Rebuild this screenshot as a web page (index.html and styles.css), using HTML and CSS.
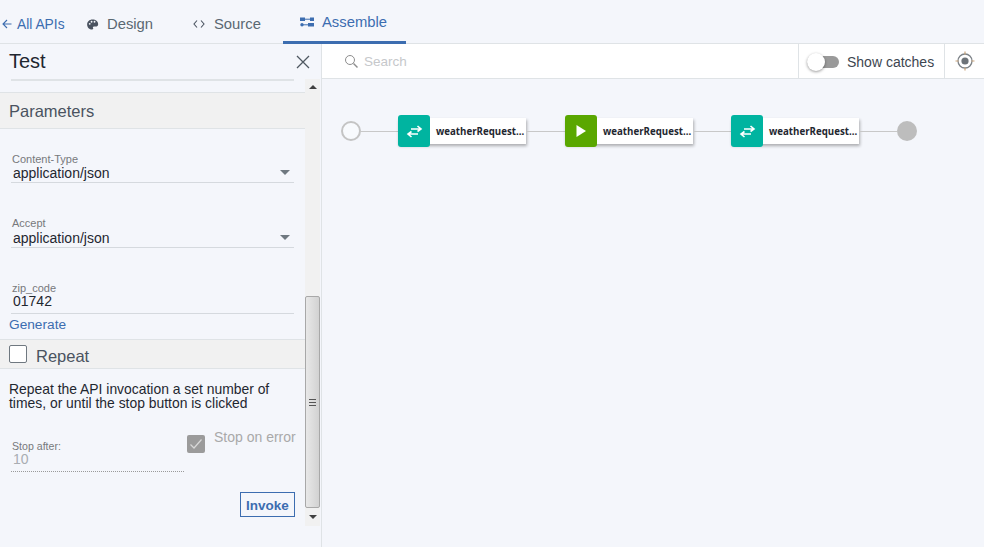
FILE: index.html
```html
<!DOCTYPE html>
<html lang="en">
<head>
    <meta charset="UTF-8">
    <meta name="viewport" content="width=device-width, initial-scale=1.0">
    <title>Assemble</title>
    <link rel="stylesheet" href="styles.css">
</head>
<body>
    <nav class="topnav">
        <a class="back-link">
            <svg width="10" height="10" viewBox="0 0 10 10"><path fill="none" stroke="#3c6db0" stroke-width="1.100" d="M5 1 1 5l4 4M1 5h8.500"/></svg>
            All APIs
        </a>
        <a class="tab tab-design">
            <svg class="tab-icon" width="13" height="13" viewBox="0 0 14 14"><path fill="#4a5360" fill-rule="evenodd" d="M7 1.500C3.600 1.500 1.200 3.900 1.200 7s2.500 5.500 5.300 5.500c1.300 0 1.500-.9 1.100-1.600-.5-.9 0-1.700 1-1.700h1.600c1.800 0 2.900-1 2.900-2.600C13.100 3.600 10.500 1.500 7 1.500zM4 7.300a1 1 0 1 1 0-2 1 1 0 0 1 0 2zm2-2.300a1 1 0 1 1 0-2 1 1 0 0 1 0 2zm3.200 0a1 1 0 1 1 0-2 1 1 0 0 1 0 2z"/></svg>
            Design
        </a>
        <a class="tab tab-source">
            <svg class="tab-icon" width="12" height="10" viewBox="0 0 12 10"><path fill="none" stroke="#4a5360" stroke-width="1.100" d="M4 1.500 1 5l3 3.500M8 1.500 11 5 8 8.500"/></svg>
            Source
        </a>
        <a class="tab tab-active">
            <svg class="tab-icon" width="14" height="10" viewBox="0 0 14 10"><g fill="#3c6db0"><rect x="0" y="0.500" width="5" height="3.500"/><rect x="10" y="0.500" width="4" height="3.500"/><rect x="5" y="1.700" width="5" height="1"/><circle cx="2" cy="7.800" r="1.700"/><rect x="2" y="7.300" width="7" height="1"/><rect x="8" y="6" width="6" height="3.500"/></g></svg>
            Assemble
        </a>
    </nav>

    <div class="workspace">
        <aside class="test-panel">
            <div class="panel-title">
                <h1>Test</h1>
                <svg width="14" height="14" viewBox="0 0 14 14"><path stroke="#4f5861" stroke-width="1.300" d="M1 1l12 12M13 1 1 13"/></svg>
            </div>

            <div class="panel-scroll">
                <div class="panel-content">
                    <div class="title-rule"></div>
                    <h2 class="section-head">Parameters</h2>

                    <div class="field field-first">
                        <label>Content-Type</label>
                        <div class="field-value">application/json<span class="caret"></span></div>
                    </div>
                    <div class="field field-next">
                        <label>Accept</label>
                        <div class="field-value">application/json<span class="caret"></span></div>
                    </div>
                    <div class="field field-zip">
                        <label>zip_code</label>
                        <div class="field-value">01742</div>
                    </div>
                    <a class="generate">Generate</a>

                    <div class="section-head repeat-head">
                        <span class="checkbox"></span>
                        <span class="repeat-label">Repeat</span>
                    </div>
                    <p class="repeat-desc">Repeat the API invocation a set number of times, or until the stop button is clicked</p>

                    <div class="stop-row">
                        <div class="stop-after">
                            <label>Stop after:</label>
                            <div class="stop-value">10</div>
                        </div>
                        <span class="checkbox-disabled">
                            <svg width="14" height="12" viewBox="0 0 14 12"><path fill="none" stroke="#d8d8d8" stroke-width="1.200" d="M1.500 6.500 5 10l7.500-8.500"/></svg>
                        </span>
                        <span class="stop-error">Stop on error</span>
                    </div>

                    <div class="invoke-row">
                        <button class="invoke">Invoke</button>
                    </div>
                </div>

                <div class="scrollbar">
                    <span class="arrow-up"></span>
                    <div class="scroll-space"></div>
                    <div class="scroll-thumb"><span class="grip"></span></div>
                    <span class="arrow-down"></span>
                </div>
            </div>
        </aside>

        <main class="canvas-area">
            <div class="toolbar">
                <div class="search">
                    <svg width="15" height="15" viewBox="0 0 15 15"><circle cx="6" cy="6" r="4.500" fill="none" stroke="#8d8d8d"/><path stroke="#8d8d8d" stroke-width="1.500" d="M9.500 9.500l4 4"/></svg>
                    <span>Search</span>
                </div>
                <div class="catches">
                    <span class="toggle"><span class="knob"></span></span>
                    Show catches
                </div>
                <div class="locate">
                    <svg width="20" height="20" viewBox="0 0 20 20"><circle cx="10" cy="10" r="7" fill="none" stroke="#7d8388" stroke-width="1.300"/><circle cx="10" cy="10" r="3.600" fill="#6d7378"/><path stroke="#c9a47a" stroke-width="1.200" d="M10 0.500v3M10 16.500v3M0.500 10h3M16.500 10h3"/></svg>
                </div>
            </div>

            <div class="flow">
                <span class="node-start"></span>
                <span class="wire wire-short"></span>
                <div class="policy">
                    <span class="policy-icon teal">
                        <svg width="17" height="13" viewBox="0 0 17 13"><g fill="none" stroke="#fff" stroke-width="1.600"><path d="M5 4h10M11.500 1l3.500 3-3.500 2.500"/><path d="M12 9H2M5.500 6.500 2 9l3.500 3"/></g></svg>
                    </span>
                    <span class="policy-name">weatherRequest...</span>
                </div>
                <span class="wire wire-long"></span>
                <div class="policy">
                    <span class="policy-icon green">
                        <svg width="12" height="12" viewBox="0 0 12 12"><path fill="#fff" d="M1.500 0 11 6l-9.500 6z"/></svg>
                    </span>
                    <span class="policy-name">weatherRequest...</span>
                </div>
                <span class="wire"></span>
                <div class="policy">
                    <span class="policy-icon teal">
                        <svg width="17" height="13" viewBox="0 0 17 13"><g fill="none" stroke="#fff" stroke-width="1.600"><path d="M5 4h10M11.500 1l3.500 3-3.500 2.500"/><path d="M12 9H2M5.500 6.500 2 9l3.500 3"/></g></svg>
                    </span>
                    <span class="policy-name">weatherRequest...</span>
                </div>
                <span class="wire"></span>
                <span class="node-end"></span>
            </div>
        </main>
    </div>
</body>
</html>
```

FILE: styles.css
```css
* {
    box-sizing: border-box;
}

html, body {
    height: 100%;
}

body {
    margin: 0;
    background-color: #f4f6fb;
    color: #1f2730;
    font-family: 'Liberation Sans', Arial, sans-serif;
    display: flex;
    flex-direction: column;
    overflow: hidden;
}

/* Top navigation */
.topnav {
    height: 44px;
    flex: none;
    display: flex;
    align-items: stretch;
    border-bottom: 1px solid #dfe3e6;
    font-size: 14.800px;
    color: #5a6872;
}

.back-link {
    display: flex;
    align-items: center;
    gap: 5px;
    height: 44px;
    width: 86px;
    padding: 4px 0 0 2px;
    color: #3c6db0;
    font-size: 13.800px;
}

.tab {
    display: flex;
    align-items: center;
    height: 44px;
    padding-top: 4px;
}

.tab-design {
    width: 107px;
    gap: 8px;
}

.tab-source {
    width: 90px;
    gap: 9px;
}

.tab-active {
    width: 123px;
    gap: 8px;
    padding-left: 17px;
    padding-top: 2px;
    color: #3c6db0;
    border-bottom: 3px solid #3c6db0;
}

/* Left test panel */
.workspace {
    flex: 1;
    display: flex;
    min-height: 0;
}

.test-panel {
    width: 322px;
    flex: none;
    border-right: 1px solid #dfe3e6;
}

.panel-title {
    height: 35px;
    display: flex;
    align-items: center;
    justify-content: space-between;
    padding: 0 11px 0 9px;
}

.panel-title h1 {
    margin: 0;
    font-size: 20px;
    font-weight: normal;
}

.panel-scroll {
    display: flex;
    height: 447px;
}

.panel-content {
    width: 305px;
    flex: none;
}

.title-rule {
    height: 2px;
    margin: 0 11px;
    background-color: #dfe3e6;
}

.section-head {
    margin: 0;
    background-color: #f1f1f1;
    border-top: 1px solid #dfe3e6;
    border-bottom: 1px solid #dfe3e6;
    font-size: 16.500px;
    font-weight: normal;
    color: #4a5360;
}

h2.section-head {
    margin-top: 11px;
    height: 37px;
    line-height: 36px;
    padding-left: 9px;
}

.field {
    margin: 0 11px;
    height: 30px;
    border-bottom: 1px solid #d5d9de;
}

.field label, .stop-after label {
    display: block;
    font-size: 11px;
    line-height: 12px;
    color: #77797c;
    padding-left: 1px;
}

.field-value {
    position: relative;
    font-size: 14px;
    line-height: 16px;
    padding-left: 2px;
}

.field-first {
    margin-top: 24px;
}

.field-next {
    margin-top: 34px;
    height: 31px;
}

.field-next label {
    line-height: 13px;
}

.field-zip {
    margin-top: 34px;
    height: 32px;
}

.field-zip label {
    line-height: 13px;
    margin-bottom: -2px;
}

.caret {
    position: absolute;
    right: 4px;
    top: 5px;
    border-left: 5px solid transparent;
    border-right: 5px solid transparent;
    border-top: 5px solid #6f7880;
}

.generate {
    display: block;
    height: 25px;
    padding: 3px 0 0 9px;
    font-size: 13.700px;
    color: #3c6db0;
}

.repeat-head {
    height: 30px;
    display: flex;
    align-items: center;
    gap: 9px;
    padding-left: 9px;
}

.repeat-label {
    padding-top: 5px;
}

.checkbox {
    width: 18px;
    height: 18px;
    background-color: #fff;
    border: 1px solid #6f7880;
    border-radius: 2px;
}

.repeat-desc {
    margin: 13px 9px 0;
    font-size: 13.900px;
    line-height: 14px;
}

.stop-row {
    display: flex;
    align-items: flex-start;
    margin: 25px 0 0 11px;
}

.stop-after {
    width: 173px;
    height: 32px;
    margin-top: 5px;
    border-bottom: 1px dotted #9a9a9a;
}

.stop-after label {
    font-size: 10.600px;
}

.stop-value {
    font-size: 14px;
    line-height: 15px;
    padding-left: 2px;
    color: #a9adb2;
}

.checkbox-disabled {
    width: 18px;
    height: 18px;
    margin: 0 9px 0 3px;
    display: flex;
    align-items: center;
    justify-content: center;
    background-color: #9b9b9b;
    border-radius: 2px;
}

.stop-error {
    font-size: 14px;
    line-height: 14px;
    margin-top: -5px;
    color: #a9a9a9;
    white-space: nowrap;
}

.invoke-row {
    display: flex;
    justify-content: flex-end;
    margin: 20px 10px 0 0;
}

.invoke {
    width: 55px;
    height: 25px;
    padding: 1px 0 0;
    background: transparent;
    border: 1px solid #3c6db0;
    color: #3c6db0;
    font-family: inherit;
    font-size: 13.500px;
    font-weight: bold;
}

/* Old style scrollbar */
.scrollbar {
    width: 15px;
    display: flex;
    flex-direction: column;
    align-items: center;
    background-color: #f1f1f1;
}

.arrow-up, .arrow-down {
    flex: none;
    width: 0;
    border-left: 4px solid transparent;
    border-right: 4px solid transparent;
}

.arrow-up {
    margin-top: 6px;
    border-bottom: 4px solid #404040;
}

.arrow-down {
    margin: 7px 0 7px;
    border-top: 4px solid #404040;
}

.scroll-space {
    flex: 1;
}

.scroll-thumb {
    width: 15px;
    height: 212px;
    display: flex;
    align-items: center;
    justify-content: center;
    background: linear-gradient(to right, #e8e8e8, #d2d2d2);
    border: 1px solid #a8a8a8;
    border-radius: 2px;
}

.grip {
    width: 7px;
    height: 7px;
    border-top: 1px solid #555;
    border-bottom: 1px solid #555;
    background: linear-gradient(#555, #555) center / 100% 1px no-repeat;
}

/* Right side */
.canvas-area {
    flex: 1;
    min-width: 0;
}

.toolbar {
    height: 35px;
    display: flex;
    background-color: #fff;
    border-bottom: 1px solid #dfe3e6;
}

.search {
    flex: 1;
    display: flex;
    align-items: center;
    gap: 5px;
    padding: 1px 0 0 22px;
    font-size: 13.500px;
    color: #c6c8cb;
}

.catches {
    width: 146px;
    display: flex;
    align-items: center;
    gap: 8px;
    padding: 1px 0 0 8px;
    border-left: 1px solid #dfe3e6;
    font-size: 14px;
    color: #3d4650;
}

.toggle {
    position: relative;
    width: 32px;
    height: 12px;
    border-radius: 6px;
    background-color: #9a9a9a;
}

.knob {
    position: absolute;
    left: 0;
    top: -3px;
    width: 18px;
    height: 18px;
    border-radius: 50%;
    background-color: #fff;
    box-shadow: 0 1px 3px rgba(0, 0, 0, 0.4);
}

.locate {
    width: 40px;
    display: flex;
    align-items: center;
    justify-content: center;
    border-left: 1px solid #dfe3e6;
}

.flow {
    display: flex;
    align-items: center;
    padding: 39px 0 0 19px;
}

.node-start {
    width: 20px;
    height: 20px;
    flex: none;
    border-radius: 50%;
    border: 2px solid #c4c4c4;
    background-color: #f8fafd;
}

.node-end {
    width: 20px;
    height: 20px;
    flex: none;
    border-radius: 50%;
    background-color: #bdbdbd;
}

.wire {
    width: 38px;
    height: 1px;
    background-color: #c8c8c8;
}

.wire-short {
    width: 37px;
}

.wire-long {
    width: 39px;
}

.policy {
    width: 128px;
    height: 26px;
    display: flex;
    align-items: center;
    background-color: #fff;
    box-shadow: 1px 2px 3px rgba(0, 0, 0, 0.3);
}

.policy-icon {
    width: 32px;
    height: 32px;
    flex: none;
    display: flex;
    align-items: center;
    justify-content: center;
    border-radius: 3px;
}

.teal {
    background-color: #00b4a0;
}

.green {
    background-color: #5aa700;
}

.policy-name {
    padding-left: 6px;
    font-family: 'Open Sans', sans-serif;
    font-size: 9.700px;
    font-weight: 700;
    color: #1f2730;
    white-space: nowrap;
}
```
